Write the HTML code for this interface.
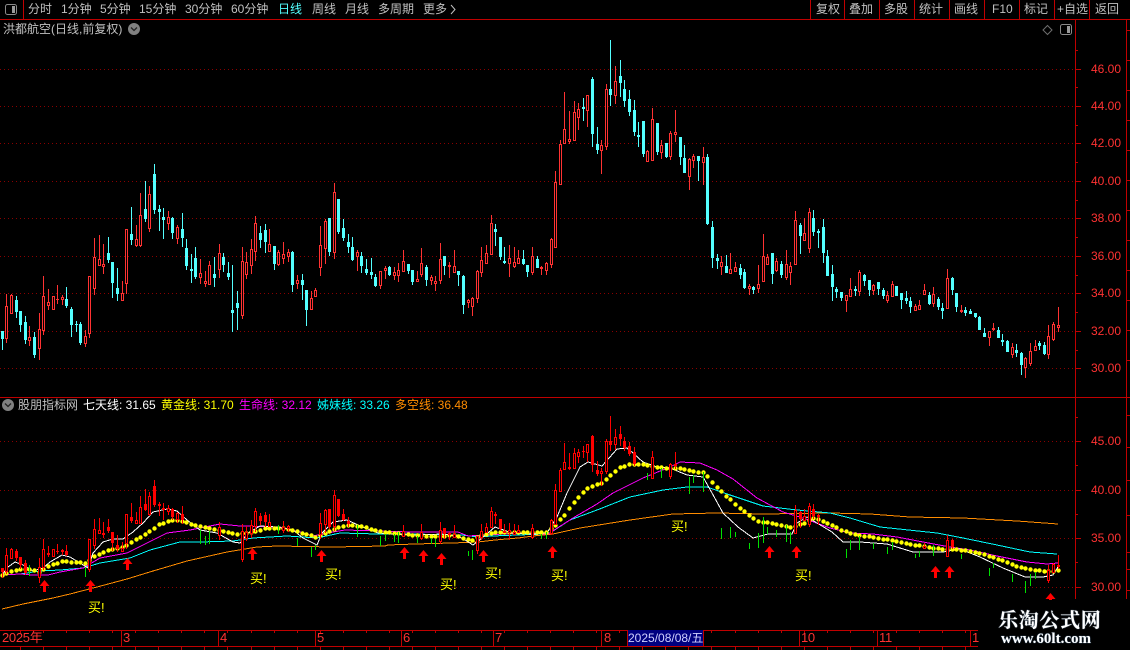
<!DOCTYPE html>
<html lang="zh"><head><meta charset="utf-8"><title>洪都航空</title>
<style>
html,body{margin:0;padding:0;background:#000;}
#a{position:relative;width:1130px;height:650px;overflow:hidden;background:#000;font:12px/14px "Liberation Sans","WenQuanYi Zen Hei","Noto Sans CJK SC",sans-serif;color:#c0c0c0;}
#a span,#a div{position:absolute;white-space:nowrap;}
svg{position:absolute;left:0;top:0;}
.m{top:2px;}
.p{left:1091px;color:#ff3232;}
.b{color:#ffff00;font-size:13px;line-height:15px;}
.t{top:631px;color:#ff3232;font-size:13px;letter-spacing:-.3px;}
</style></head><body><div id="a">
<svg id="s" width="1130" height="650" viewBox="0 0 1130 650"></svg>

<span class="m" style="left:28px">分时</span><span class="m" style="left:61px">1分钟</span><span class="m" style="left:100px">5分钟</span><span class="m" style="left:139px">15分钟</span><span class="m" style="left:185px">30分钟</span><span class="m" style="left:231px">60分钟</span><span class="m" style="left:278px;color:#54ffff">日线</span><span class="m" style="left:312px">周线</span><span class="m" style="left:345px">月线</span><span class="m" style="left:378px">多周期</span><span class="m" style="left:423px">更多</span>
<span class="m" style="left:816px">复权</span><span class="m" style="left:849px">叠加</span><span class="m" style="left:884px">多股</span><span class="m" style="left:919px">统计</span><span class="m" style="left:954px">画线</span><span class="m" style="left:992px">F10</span><span class="m" style="left:1024px">标记</span><span class="m" style="left:1057px">+自选</span><span class="m" style="left:1095px">返回</span>

<span style="left:3px;top:22px">洪都航空(日线,前复权)</span>

<span style="left:18px;top:398px">股朋指标网</span>
<span style="left:83px;top:398px;color:#fff">七天线: 31.65</span>
<span style="left:161px;top:398px;color:#ff0">黄金线: 31.70</span>
<span style="left:239px;top:398px;color:#f0f">生命线: 32.12</span>
<span style="left:317px;top:398px;color:#0ff">姊妹线: 33.26</span>
<span style="left:395px;top:398px;color:#ff8c00">多空线: 36.48</span>

<span class="p" style="top:62px">46.00</span><span class="p" style="top:99px">44.00</span><span class="p" style="top:136px">42.00</span><span class="p" style="top:174px">40.00</span><span class="p" style="top:211px">38.00</span><span class="p" style="top:249px">36.00</span><span class="p" style="top:286px">34.00</span><span class="p" style="top:324px">32.00</span><span class="p" style="top:361px">30.00</span>
<span class="p" style="top:434px">45.00</span><span class="p" style="top:483px">40.00</span><span class="p" style="top:531px">35.00</span><span class="p" style="top:580px">30.00</span>

<span class="b" style="left:88px;top:600px">买!</span><span class="b" style="left:250px;top:571px">买!</span><span class="b" style="left:325px;top:567px">买!</span><span class="b" style="left:440px;top:577px">买!</span><span class="b" style="left:485px;top:566px">买!</span><span class="b" style="left:551px;top:568px">买!</span><span class="b" style="left:671px;top:519px">买!</span><span class="b" style="left:795px;top:568px">买!</span>

<span class="t" style="left:2px">2025年</span><span class="t" style="left:123px">3</span><span class="t" style="left:220px">4</span><span class="t" style="left:317px">5</span><span class="t" style="left:403px">6</span><span class="t" style="left:495px">7</span><span class="t" style="left:604px">8</span><span class="t" style="left:801px">10</span><span class="t" style="left:879px">11</span><span class="t" style="left:972px">1</span>
<div style="left:627px;top:630px;width:77px;height:16px;background:#000080;color:#d0d0ff;font-size:12px;line-height:16px;text-align:center;border-left:1px solid #c00000;border-right:1px solid #c00000;box-sizing:border-box;">2025/08/08/五</div>

<div style="left:984px;top:600px;width:146px;height:50px;background:#000"></div>
<span style="left:998px;top:606px;color:#fff;font:bold 20px/26px 'Noto Serif CJK SC','Liberation Serif',serif;letter-spacing:.7px;text-shadow:0 0 1px #88aacc">乐淘公式网</span>
<span style="left:1001px;top:631px;color:#fff;font:bold 15px/17px 'Liberation Serif',serif;text-shadow:0 0 1px #6699cc">www.60lt.com</span>
</div>
<script>
var D="c 331 338 331 349|r 306 338 294 342|r 295 313 294 313|c 300 311 296 317|c 311 324 311 331|c 322 339 316 343|r 337 340 326 345|c 337 354 332 357|r 329 348 313 359|r 296 330 276 334|r 302 305 289 309|r 296 309 296 309|r 299 299 285 303|r 297 299 295 304|c 299 305 287 307|c 309 324 307 336|c 324 324 321 331|c 324 342 322 344|r 336 343 330 346|r 276 333 276 337|r 257 288 238 294|r 259 265 235 265|r 264 266 244 273|c 253 259 237 262|c 262 282 262 297|c 288 293 268 300|r 293 300 281 300|r 229 283 229 293|c 234 239 207 244|r 239 245 225 246|r 215 245 193 246|c 209 218 181 221|r 194 228 186 231|c 174 209 164 213|c 209 211 205 230|c 217 219 208 238|r 217 223 211 229|c 218 232 217 238|r 227 238 225 243|c 229 237 213 246|c 248 265 239 269|c 269 270 254 282|c 258 276 247 278|r 273 277 259 283|r 281 283 271 286|r 265 284 261 284|c 274 277 257 286|r 253 269 244 277|c 257 264 253 271|c 273 276 262 279|c 310 312 265 331|c 303 307 291 329|r 261 315 247 318|r 262 274 252 278|r 249 265 239 273|r 223 251 216 260|c 233 239 226 247|c 230 241 224 252|r 244 251 229 251|c 246 263 246 269|r 252 264 250 265|r 254 258 242 263|r 252 256 249 261|c 252 284 251 291|r 280 283 275 288|c 280 284 274 299|c 290 309 290 325|r 298 309 291 309|r 290 296 288 296|r 245 267 226 275|r 221 248 219 263|c 218 251 218 255|r 192 252 183 258|c 199 231 199 233|"+
"c 228 237 219 240|c 242 246 234 252|c 247 259 237 260|r 252 256 250 270|c 256 265 252 272|c 269 272 259 274|c 272 274 258 278|c 277 285 274 286|r 271 285 271 288|r 268 270 266 278|c 267 274 266 275|r 272 275 267 279|r 270 275 263 281|r 261 271 250 271|c 264 270 264 273|c 270 281 270 284|r 279 281 271 281|r 263 274 248 276|c 267 279 265 285|r 277 280 275 284|r 281 283 276 290|r 259 280 243 283|c 256 265 256 274|r 265 266 262 277|r 266 272 250 272|c 271 274 271 285|c 276 304 275 313|r 300 302 299 307|r 298 306 297 315|r 271 298 270 302|r 260 272 247 276|r 253 263 245 263|r 223 254 215 254|c 229 231 224 245|c 237 256 237 259|c 261 262 247 263|r 258 263 245 276|r 262 266 247 267|r 258 263 250 263|c 259 263 250 264|c 265 271 265 276|r 256 272 247 274|c 259 267 256 267|r 267 268 266 274|r 263 270 262 274|r 239 264 238 267|r 182 247 171 247|"+
"r 144 184 140 184|r 129 143 92 143|r 139 141 111 143|r 112 140 101 140|r 109 117 103 129|c 107 108 98 120|r 95 110 95 126|c 79 133 77 146|c 144 149 127 153|r 145 150 140 173|r 89 146 84 149|c 89 94 40 105|r 81 95 66 103|c 76 82 60 96|c 89 100 80 106|c 99 111 90 115|c 110 131 100 135|c 135 136 122 146|c 121 153 121 156|r 151 161 150 161|r 119 160 108 160|c 123 151 123 154|r 145 152 140 158|c 143 156 143 157|r 133 156 131 159|r 132 134 110 141|c 137 156 137 164|c 158 172 145 172|r 159 176 158 189|r 156 160 154 167|c 156 160 156 180|r 157 162 147 184|c 157 223 154 224|c 227 257 221 267|c 258 260 254 268|r 262 266 256 274|c 266 272 255 272|r 269 273 253 273|r 267 271 262 271|c 268 274 264 278|c 272 287 269 288|r 286 288 284 294|"+
"c 287 289 286 293|r 284 288 265 292|r 256 281 234 281|r 257 264 254 264|c 253 273 253 283|r 261 270 258 271|"+
"c 264 274 261 277|r 264 277 250 279|r 266 272 262 284|r 220 264 211 264|c 225 235 223 253|r 233 240 218 240|r 212 248 208 252|c 218 231 210 235|c 231 232 229 247|c 227 252 219 262|c 256 275 250 275|c 274 286 265 300|c 289 291 287 297|c 292 297 292 300|r 295 300 295 311|r 289 296 278 296|c 289 290 286 295|r 272 291 270 295|c 275 280 274 285|c 280 289 280 295|r 285 290 284 294|c 282 288 282 294|c 290 295 288 298|r 295 300 291 302|r 284 296 281 296|c 286 295 286 295|c 293 299 293 308|c 298 300 291 303|c 301 306 297 312|r 306 310 304 310|r 305 309 300 309|r 290 294 284 294|c 295 303 292 304|r 294 303 287 306|c 299 306 297 309|c 308 310 303 318|r 278 308 269 308|c 278 289 277 294|c 293 306 293 311|r 310 311 305 312|c 310 312 307 315|c 311 313 309 313|c 313 316 313 317|c 317 329 316 329|c 333 336 328 336|r 331 337 331 345|r 328 329 323 330|c 330 337 327 337|c 340 341 334 345|c 341 351 340 351|r 347 354 343 357|c 350 352 344 356|c 353 364 352 374|r 358 367 357 377|r 351 363 343 365|r 346 350 340 350|c 343 345 341 349|c 345 353 342 354|r 336 354 325 358|r 324 339 322 340|r 325 327 307 331";
var C=D.split("|").map(function(r){var p=r.split(" ");return{t:p[0],a:+p[1],b:+p[2],h:+p[3],l:+p[4]};});
var ON=[[0,27],[37,68],[87,185],[217,221],[240,272],[279,290],[319,350],[402,405],[421,424],[439,456],[476,521],[531,534],[550,637],[650,655],[669,678],[794,820],[923,926],[946,955],[1047,1060]];
function isOn(x){return ON.some(function(r){return x>=r[0]&&x<=r[1];});}
function X(i){return Math.floor(2.3+4.611*i);}
function L(y){return Math.round(587-(368-y)*0.5224);}
var YL=[2,575,11,571,20,569,30,569,40,572,47,566,62,561,77,562,85,563,93,557,107,550,123,547,137,539,147,533,160,524,173,520,183,521,200,526,217,529,237,534,250,532,267,528,283,528,300,532,317,537,328,532,340,526,353,525,365,527,378,531,395,533,415,535,435,536,455,535,472,540,482,535,495,532,518,532,535,532,547,532,555,525,560,520,569,509,578,497,588,488,597,484,602,483,610,475,620,467,630,464,643,464,660,467,670,468,680,468,693,471,703,472,708,476,717,487,727,496,740,508,748,514,758,521,773,523,792,527,805,523,815,517,823,521,832,525,842,530,855,534,873,537,892,540,910,544,930,547,943,549,957,549,980,553,1003,560,1020,567,1037,570,1050,571,1058,570];
var WH=[2,575,8,567,15,562,23,565,33,571,43,568,50,562,62,555,70,557,80,563,88,568,93,553,103,542,113,539,123,539,133,532,143,523,153,512,167,509,177,511,187,520,200,530,217,533,233,542,240,543,248,533,260,526,277,527,293,530,303,538,317,545,322,533,333,522,347,520,358,525,378,533,412,535,445,534,462,538,473,545,482,538,495,527,512,533,533,534,547,533,557,517,567,493,580,467,588,462,602,466,617,449,627,448,633,453,643,462,657,467,670,468,687,475,703,477,712,493,723,513,738,527,753,538,768,534,792,534,797,523,807,517,832,532,843,542,860,542,887,544,913,552,943,552,960,549,980,557,1003,568,1025,577,1043,577,1053,575,1058,567];
var MG=[2,575,20,574,33,575,48,575,60,572,83,568,100,558,127,553,147,543,167,533,190,530,220,524,240,526,280,527,300,532,313,536,333,532,345,530,378,531,412,532,458,532,468,536,485,535,522,533,548,534,573,518,597,504,613,493,643,478,670,467,680,462,700,463,717,470,733,479,757,498,783,512,803,518,830,528,850,533,873,534,897,537,923,542,950,547,970,550,997,556,1027,562,1047,564,1058,563];
var CY=[2,575,20,574,40,571,60,570,83,568,100,563,130,558,150,550,180,542,200,542,233,541,253,538,287,536,317,538,340,533,378,534,412,534,462,535,478,537,492,536,545,534,550,533,570,520,597,510,630,497,663,490,687,487,707,487,730,495,763,506,797,510,830,513,850,518,880,527,937,533,963,538,997,545,1030,552,1057,554];
var OR=[2,609,23,604,53,598,70,594,97,587,127,579,153,571,187,561,227,552,257,547,277,546,333,547,385,546,388,545,415,544,452,543,478,542,495,540,518,538,533,536,553,534,580,528,630,520,673,514,717,513,763,514,830,513,870,514,910,517,963,518,1017,521,1058,524];
function pts(a){var s="";for(var i=0;i<a.length;i+=2)s+=a[i]+","+a[i+1]+" ";return s;}
function interp(a,x){for(var i=0;i<a.length-2;i+=2){if(x<=a[i+2]){var t=(x-a[i])/(a[i+2]-a[i]);return a[i+1]+t*(a[i+3]-a[i+1]);}}return a[a.length-1];}
var o=[];
function path(d,st,ex){o.push('<path d="'+d+'" stroke="'+st+'" fill="none" shape-rendering="crispEdges" '+(ex||'')+'/>');}
function rect(x,y,w,h,f){o.push('<rect x="'+x+'" y="'+y+'" width="'+w+'" height="'+h+'" fill="'+f+'" shape-rendering="crispEdges"/>');}
/* grid */
var g="";[69,106,143,181,218,256,293,331,368].forEach(function(y){g+="M0 "+(y+.5)+"H1075";});
[441,490,538,587].forEach(function(y){g+="M0 "+(y+.5)+"H1075";});
path(g,"#8a0000",'stroke-dasharray="1 3"');
/* upper candles */
function candle(x,a,b,h,l,col,hollow){
  var d="M"+(x+.5)+" "+h+"V"+a+"M"+(x+.5)+" "+b+"V"+(l+1);
  if(b-a<=1){d+="M"+(x-1)+" "+(a+.5)+"h3";if(b>a)d+="M"+(x-1)+" "+(b+.5)+"h3";path(d,col);return;}
  path(d,col);
  if(hollow)o.push('<rect x="'+(x-.5)+'" y="'+(a+.5)+'" width="2" height="'+(b-a)+'" fill="#000" stroke="'+col+'" shape-rendering="crispEdges"/>');
  else rect(x-1,a,3,b-a+1,col);
}
C.forEach(function(c,i){var x=X(i);candle(x,c.a,c.b,c.h,c.l,c.t=="r"?"#ff3232":"#54ffff",c.t=="r");});
/* lower lines */
function poly(a,col){o.push('<polyline points="'+pts(a)+'" fill="none" stroke="'+col+'" shape-rendering="crispEdges"/>');}
poly(OR,"#ff8c00");poly(CY,"#00ffff");poly(MG,"#ff00ff");poly(WH,"#ffffff");
C.forEach(function(c,i){var x=X(i)+.5,y=Math.round(interp(YL,x))+.5;o.push('<circle cx="'+x+'" cy="'+y+'" r="2.2" fill="#ffff00"/>');});
/* lower candles / green lines */
C.forEach(function(c,i){var x=X(i),a=L(c.a),b=L(c.b),h=L(c.h),l=L(c.l);
  if(isOn(x)){candle(x,a,b,h,l,"#ff0000",c.t=="r");}
  else if(c.t=="r"){path("M"+(x+.5)+" "+h+"V"+(l+1),"#00e000");}
});
/* arrows */
[[44,580],[90,580],[127,558],[252,548],[321,550],[404,547],[423,550],[441,553],[483,550],[552,546],[769,546],[796,546],[935,566],[949,566],[1050,593]].forEach(function(p){var x=p[0]+.5,y=p[1];
 o.push('<path d="M'+x+' '+y+'L'+(x+5)+' '+(y+6)+'H'+(x+1.5)+'V'+(y+12)+'H'+(x-1.5)+'V'+(y+6)+'H'+(x-5)+'Z" fill="#ff0000"/>');});
/* frame lines */
var R="#c00000",f="M0 19.5H1130M0 397.5H1130M1075.5 19V599M1126.5 19V599M23.5 0V19";
[810,844,879,914,949,984,1019,1054,1089].forEach(function(x){f+="M"+(x+.5)+" 0V19";});
f+="M0 630.5H978M0 646.5H978";
[121,218,315,401,493,601,799,877,970].forEach(function(x){f+="M"+(x+.5)+" 630V646";});
for(var t=20;t<975;t+=23.05){var tx=Math.round(t)+.5;f+="M"+tx+" 630V633M"+tx+" 646V650";}
[69,106,143,181,218,256,293,331,368,441,490,538,587].forEach(function(y){f+="M1075 "+(y+.5)+"h6";});
[50,87,125,162,200,237,275,312,350,417,465,514,562].forEach(function(y){f+="M1075 "+(y+.5)+"h3";});
for(var y=30;y<390;y+=30){f+="M1126 "+(y+.5)+"h4";}
[415,447,480,515,552,569,590].forEach(function(y){f+="M1126 "+(y+.5)+"h4";});
path(f,R);
/* icons */
function split(x,y){o.push('<rect x="'+(x+.5)+'" y="'+(y+.5)+'" width="11" height="10" rx="2" fill="#000" stroke="#8a8a8a"/><rect x="'+(x+7)+'" y="'+(y+2)+'" width="3" height="7" fill="#9a9a9a"/>');}
split(5,4);split(1060,24);
o.push('<path d="M1047.5 25.5l4.5 4.5l-4.5 4.5l-4.5-4.5z" fill="none" stroke="#6e6e6e"/>');
function circ(x,y){o.push('<circle cx="'+x+'" cy="'+y+'" r="6" fill="#808080"/><path d="M'+(x-3)+' '+(y-1.5)+'l3 3l3-3" fill="none" stroke="#222" stroke-width="1.3"/>');}
circ(134,29);circ(8,405);
o.push('<path d="M451 5l4 4.5l-4 4.5" fill="none" stroke="#c0c0c0"/>');
document.getElementById("s").innerHTML=o.join("");
</script>
</body></html>
